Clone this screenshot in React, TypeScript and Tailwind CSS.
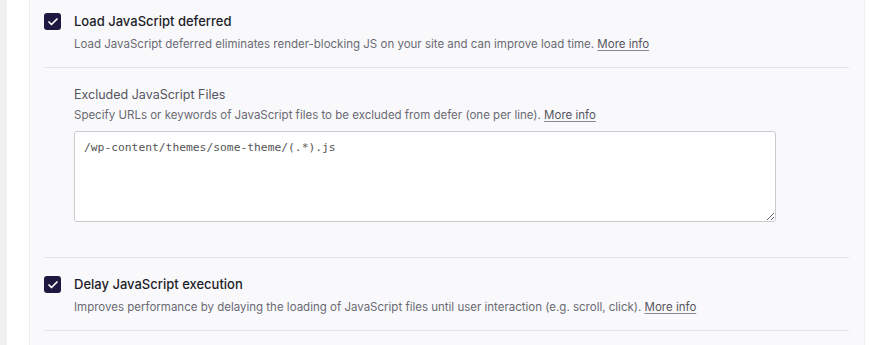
import { Check } from "lucide-react";

function Box() {
  return (
    <div className="size-[17px] flex-none rounded-[3px] bg-[#1f1840] flex items-center justify-center">
      <Check className="size-3 text-white" strokeWidth={3.5} />
    </div>
  );
}

function MoreInfo() {
  return <a className="underline underline-offset-2 text-[#55555f] decoration-[#888]">More info</a>;
}

export default function App() {
  return (
    <div className="w-[886px] h-[345px] flex bg-white font-['Inter',sans-serif] overflow-hidden">
      <div className="w-[7px] bg-[#f0f0f1] flex-none" />
      <div className="w-[22px] flex-none" />
      <div className="w-[836px] flex-none bg-[#f9f9fb] border-x border-[#eeeef1] pl-[14px] pr-[15px]">
        <div className="flex gap-[13px] pt-[13px] pb-[15px] border-b border-[#e4e4e9]">
          <Box />
          <div>
            <div className="text-[13px] font-medium text-[#1e1e2a] leading-[17px]">Load JavaScript deferred</div>
            <div className="mt-[6px] text-[11.5px] text-[#6a6a74] leading-[16px]">
              Load JavaScript deferred eliminates render-blocking JS on your site and can improve load time. <MoreInfo />
            </div>
          </div>
        </div>
        <div className="pl-[30px] pt-[18px] pb-[35px] border-b border-[#e4e4e9]">
          <div className="text-[12.5px] text-[#555560] leading-[17px]">Excluded JavaScript Files</div>
          <div className="mt-[4px] text-[11.5px] text-[#6a6a74] leading-[16px]">
            Specify URLs or keywords of JavaScript files to be excluded from defer (one per line). <MoreInfo />
          </div>
          <textarea
            className="mt-[8px] block w-[702px] h-[91px] bg-white border border-[#c9cbd0] rounded-[3px] px-[9px] py-[7px] font-['DejaVu_Sans_Mono',monospace] text-[11.3px] text-[#555] leading-[18px] outline-none"
            defaultValue="/wp-content/themes/some-theme/(.*).js"
          />
        </div>
        <div className="flex gap-[13px] pt-[18px] pb-[15px] border-b border-[#e4e4e9]">
          <Box />
          <div>
            <div className="text-[13px] font-medium text-[#1e1e2a] leading-[17px]">Delay JavaScript execution</div>
            <div className="mt-[6px] text-[11.5px] text-[#6a6a74] leading-[16px]">
              Improves performance by delaying the loading of JavaScript files until user interaction (e.g. scroll, click). <MoreInfo />
            </div>
          </div>
        </div>
      </div>
    </div>
  );
}
